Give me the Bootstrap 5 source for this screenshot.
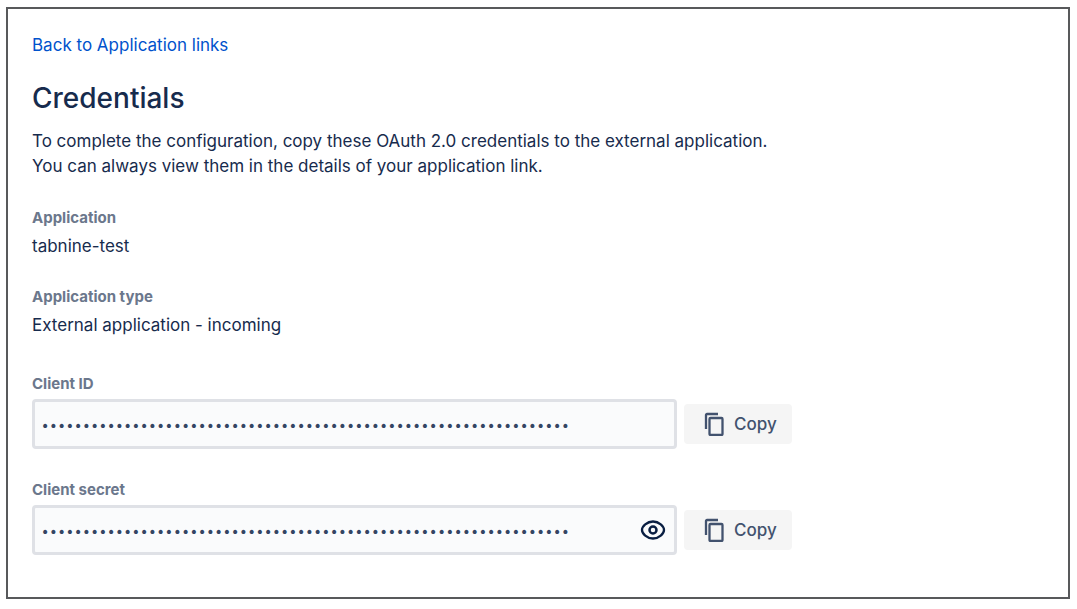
<!DOCTYPE html>
<html lang="en">
<head>
<meta charset="utf-8">
<meta name="viewport" content="width=device-width, initial-scale=1">
<title>Credentials</title>
<link href="https://cdn.jsdelivr.net/npm/bootstrap@5.3.0/dist/css/bootstrap.min.css" rel="stylesheet">
<style>
  body { font-family: Inter, "Liberation Sans", sans-serif; font-size: 17px; line-height: 25px; color: #172b4d; background: #fff; }
  .panel { border: 2px solid #58595b; margin: 7px 7px 10px 6px; padding: 24px 24px 42px; }
  .back-link { color: #0052cc; }
  h1 { font-size: 28px; line-height: 36px; font-weight: 500; margin: 22px 0 13px; }
  .field-title { font-size: 15px; line-height: 24px; font-weight: 700; color: #6b778c; margin: 0; }
  .details dd { line-height: 32px; margin-bottom: 23px; }
  .details { margin: 27px 0 31px; }
  .client-row .field-title { margin-bottom: 3px; }
  .client-row + .client-row { margin-top: 29px; }
  .field-line { gap: 7px; }
  .secret-box { flex: 0 1 645px; }
  .secret-box .form-control { height: 50px; border: 3px solid #dfe1e6; border-radius: 4px; background: #fafbfc; color: #344563; padding: 4px 48px 0 6px; font-family: "DejaVu Sans", sans-serif; font-size: 14px; }
  .eye-btn { right: 11px; top: 12px; width: 26px; height: 26px; color: #091e42; }
  .copy-btn { background: #f5f5f5; color: #42526e; font-size: 17px; font-weight: 500; line-height: 25px; height: 40px; border: 0; border-radius: 4px; padding: 0 15px 0 20px; }
</style>
</head>
<body>
<main class="panel">
  <a href="#" class="back-link text-decoration-none">Back to Application links</a>
  <h1>Credentials</h1>
  <p class="mb-0">To complete the configuration, copy these OAuth 2.0 credentials to the external application.<br>You can always view them in the details of your application link.</p>
  <dl class="details">
    <dt class="field-title">Application</dt>
    <dd>tabnine-test</dd>
    <dt class="field-title">Application type</dt>
    <dd>External application - incoming</dd>
  </dl>
  <div class="client-row">
    <label class="field-title d-block" for="client-id">Client ID</label>
    <div class="field-line d-flex align-items-center">
      <div class="secret-box position-relative">
        <input class="form-control" type="password" id="client-id" readonly value="0123456789abcdef0123456789abcdef0123456789abcdef0123456789abcdef">
      </div>
      <button type="button" class="btn copy-btn d-flex align-items-center gap-2">
        <svg width="22" height="24" viewBox="0 0 22 24" fill="none" stroke="currentColor" stroke-width="2.3" aria-hidden="true"><path d="M2 17V3a1 1 0 0 1 1-1h11"/><rect x="5.500" y="6" width="13" height="17" rx="1"/></svg>
        Copy
      </button>
    </div>
  </div>
  <div class="client-row">
    <label class="field-title d-block" for="client-secret">Client secret</label>
    <div class="field-line d-flex align-items-center">
      <div class="secret-box position-relative">
        <input class="form-control" type="password" id="client-secret" readonly value="fedcba9876543210fedcba9876543210fedcba9876543210fedcba9876543210">
        <button type="button" class="eye-btn btn p-0 border-0 position-absolute d-flex" aria-label="Show client secret">
          <svg width="26" height="26" viewBox="0 0 26 26" fill="none" stroke="currentColor" aria-hidden="true"><path stroke-width="2.300" d="M13 4.500C7 4.500 2 9.500 2 13s5 8.500 11 8.500S24 16.500 24 13 19 4.500 13 4.500z"/><circle cx="13" cy="13" r="3.500" stroke-width="2.500"/></svg>
        </button>
      </div>
      <button type="button" class="btn copy-btn d-flex align-items-center gap-2">
        <svg width="22" height="24" viewBox="0 0 22 24" fill="none" stroke="currentColor" stroke-width="2.3" aria-hidden="true"><path d="M2 17V3a1 1 0 0 1 1-1h11"/><rect x="5.500" y="6" width="13" height="17" rx="1"/></svg>
        Copy
      </button>
    </div>
  </div>
</main>
<script src="https://cdn.jsdelivr.net/npm/bootstrap@5.3.0/dist/js/bootstrap.bundle.min.js"></script>
</body>
</html>
